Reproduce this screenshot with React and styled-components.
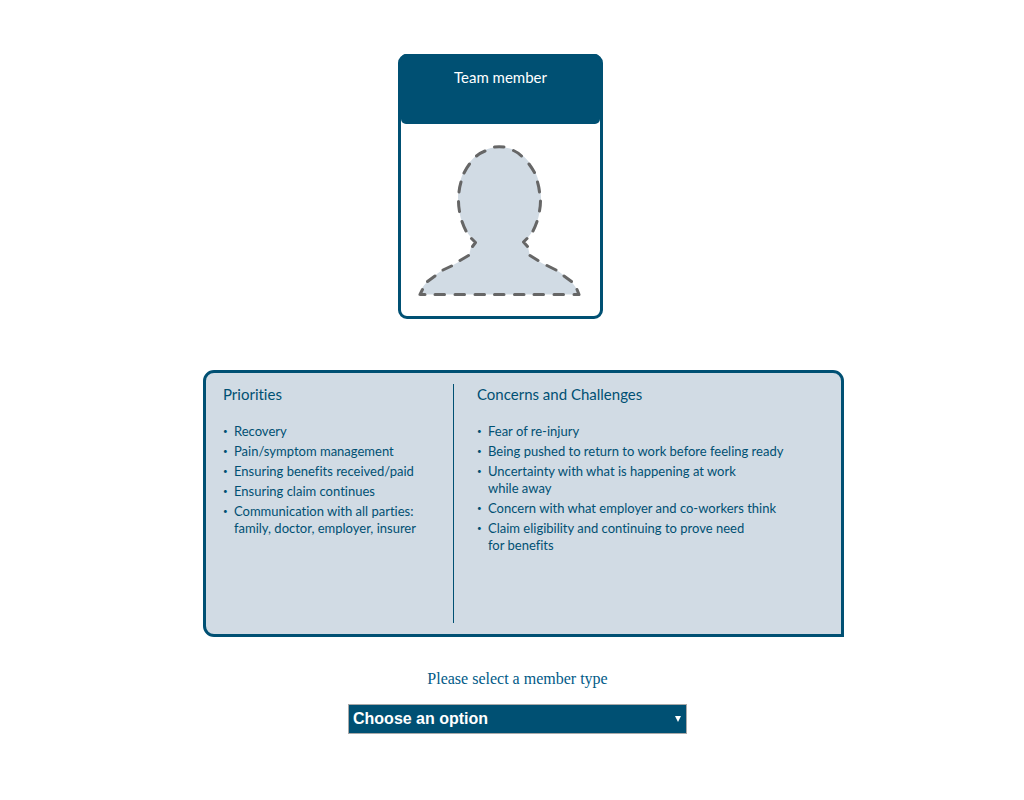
import React from "react";
import styled, { createGlobalStyle } from "styled-components";

const navy = "#005073";
const mist = "#d1dbe4";

const GlobalStyle = createGlobalStyle`
  * { box-sizing: border-box; }
  body { margin: 0; background: #fff; }
`;

const Page = styled.main`
  display: flex;
  flex-direction: column;
  align-items: center;
  padding: 54px 16px 40px;
  color: ${navy};
`;

const Card = styled.section`
  width: 205px;
  margin-right: 23px;
  border: 3px solid ${navy};
  border-radius: 9px;
  background: #fff;
`;

const CardTitle = styled.h1`
  margin: 0;
  height: 67px;
  padding-top: 10px;
  background: ${navy};
  border-radius: 5px;
  box-shadow: 0 -3px 0 ${navy};
  color: #fff;
  font-family: Lato, sans-serif;
  font-size: 15px;
  font-weight: 400;
  line-height: 20px;
  text-align: center;
`;

const Portrait = styled.div`
  display: flex;
  justify-content: center;
  height: 192px;
  padding-top: 18px;
`;

const Panel = styled.section`
  display: flex;
  width: 100%;
  max-width: 641px;
  min-height: 267px;
  margin: 51px 0 0 23px;
  padding: 11px 17px;
  background: ${mist};
  border: 3px solid ${navy};
  border-radius: 11px 11px 0 11px;
  font-variant-ligatures: none;
`;

const Column = styled.div`
  flex: ${(p) => (p.$wide ? "1" : "0 0 230px")};
  padding-left: ${(p) => (p.$wide ? "23px" : "0")};
  border-left: ${(p) => (p.$wide ? `1px solid ${navy}` : "0")};
`;

const ColumnTitle = styled.h2`
  margin: 0 0 19px;
  font-family: Lato, sans-serif;
  font-size: 15px;
  font-weight: 400;
  line-height: 20px;
`;

const List = styled.ul`
  margin: 0;
  padding: 0;
  list-style: none;
  font-family: Lato, sans-serif;
  font-size: 13px;
  line-height: 17px;
`;

const Item = styled.li`
  display: flex;
  margin-bottom: 3px;

  &::before {
    content: "•";
    flex: 0 0 11px;
    font-size: 8px;
  }
`;

const Picker = styled.div`
  display: flex;
  flex-direction: column;
  align-items: center;
  gap: 16px;
  width: 100%;
  max-width: 339px;
  margin: 32px 0 0 11px;
`;

const Label = styled.label`
  color: #005a87;
  font: 400 16px/19px "Liberation Serif", serif;
`;

const SelectBox = styled.div`
  display: grid;
  align-items: center;
  width: 100%;
`;

const Select = styled.select`
  grid-area: 1 / 1;
  width: 100%;
  height: 30px;
  padding: 0 24px 0 4px;
  appearance: none;
  border: 1px solid #a9a9a9;
  border-radius: 0;
  background: ${navy};
  color: #fff;
  font: 700 16px/20px "Liberation Sans", sans-serif;
`;

const Arrow = styled.svg`
  grid-area: 1 / 1;
  justify-self: end;
  margin-right: 6px;
  pointer-events: none;
`;

const priorities = [
  "Recovery",
  "Pain/symptom management",
  "Ensuring benefits received/paid",
  "Ensuring claim continues",
  <>Communication with all parties:<br />family, doctor, employer, insurer</>,
];

const concerns = [
  "Fear of re-injury",
  "Being pushed to return to work before feeling ready",
  <>Uncertainty with what is happening at work<br />while away</>,
  "Concern with what employer and co-workers think",
  <>Claim eligibility and continuing to prove need<br />for benefits</>,
];

function Bullets({ items }) {
  return (
    <List>
      {items.map((text, i) => (
        <Item key={i}><span>{text}</span></Item>
      ))}
    </List>
  );
}

const dashes = [
  // head, clockwise from the top
  "M494.5 147Q499 146.600 504 147",
  "M513.500 150.500Q518 152.500 521.500 156",
  "M529 164Q532 168 534.500 172.500",
  "M537.500 182Q539 187 539.500 192",
  "M540.500 201Q540.500 206 539.500 211",
  "M537 221.500Q535.500 226 533 231",
  "M461 182Q459.500 187 459 192",
  "M458.500 201.500Q458.500 206 459.500 211.500",
  "M462 221.500Q463.500 226 466 231",
  "M464 173Q466.500 168 469.500 164",
  "M476.500 156Q480 153 485 151",
  // neck
  "M471.500 238.500L475.500 242.500L472.500 246.500",
  "M527 238.500L523.500 242L527.500 246.500",
  // shoulders
  "M468.500 255.500L460 260.500",
  "M451.500 266L443 270",
  "M435 276L427.500 281.500",
  "M530 255.500L538 260.500",
  "M547 265.500L556 270",
  "M564 276L571.500 281.500",
  // base
  "M422.500 289.500L420 294.500H425",
  "M577 289.500L579 294.500H574",
  "M435 294.500H444.500M455 294.500H464.500M475 294.500H484.500M494.500 294.500H504M514.500 294.500H524M534 294.500H543.500M554 294.500H563.500",
];

function Silhouette() {
  return (
    <svg width="170" height="160" viewBox="416 142 170 160" aria-hidden="true">
      <path
        fill={mist}
        d="M419.500 294.500H579C576 284 566 276 556 270C547 266 538 261 530 256L528 247L523.500 242C534 233 541 217 541 198C541 170 523 147 499.500 147C476 147 458 170 458 198C458 217 465 233 475.500 242L471 247L469 255.500C461 261 452 266 443 270C433 276 422 284 419.500 294.500Z"
      />
      <path
        fill="none"
        stroke="#666"
        strokeWidth="3"
        strokeLinecap="round"
        strokeLinejoin="round"
        d={dashes.join("")}
      />
    </svg>
  );
}

export default function App() {
  return (
    <>
      <GlobalStyle />
      <Page>
        <Card>
          <CardTitle>Team member</CardTitle>
          <Portrait><Silhouette /></Portrait>
        </Card>
        <Panel>
          <Column>
            <ColumnTitle>Priorities</ColumnTitle>
            <Bullets items={priorities} />
          </Column>
          <Column $wide>
            <ColumnTitle>Concerns and Challenges</ColumnTitle>
            <Bullets items={concerns} />
          </Column>
        </Panel>
        <Picker>
          <Label htmlFor="member-type">Please select a member type</Label>
          <SelectBox>
            <Select id="member-type">
              <option>Choose an option</option>
            </Select>
            <Arrow width="6" height="6" viewBox="0 0 6 6" aria-hidden="true">
              <path d="M0 0H6L3 6Z" fill="#fff" />
            </Arrow>
          </SelectBox>
        </Picker>
      </Page>
    </>
  );
}
